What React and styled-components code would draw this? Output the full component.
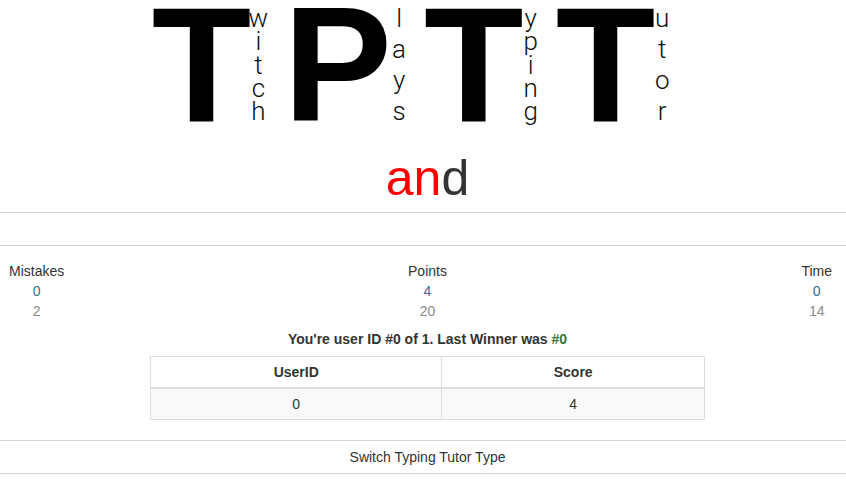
import styled, { createGlobalStyle } from "styled-components";

const GlobalStyle = createGlobalStyle`
  body {
    margin: 0;
    background: #fff;
    color: #333;
    font-family: "Liberation Sans", Arial, sans-serif;
    font-size: 14px;
    line-height: 20px;
  }
`;

const logo = [
  { big: "T", rest: "witch" },
  { big: "P", rest: "lays" },
  { big: "T", rest: "yping" },
  { big: "T", rest: "utor" },
];

const stats = [
  { label: "Mistakes", now: 0, best: 2, align: "start" },
  { label: "Points", now: 4, best: 20, align: "center" },
  { label: "Time", now: 0, best: 14, align: "end" },
];

const scores = [{ id: 0, score: 4 }];

const App = () => {
  return (
    <Page>
      <GlobalStyle />
      <Logo>
        {logo.map((g, i) => (
          <LogoGroup key={i}>
            <BigLetter>{g.big}</BigLetter>
            <SmallColumn>
              {g.rest.split("").map((c, j) => (
                <span key={j}>{c}</span>
              ))}
            </SmallColumn>
          </LogoGroup>
        ))}
      </Logo>

      <Word>
        <Typed>an</Typed>d
      </Word>

      <Rule $top={9} />
      <Rule $top={32} />

      <Stats>
        {stats.map((s) => (
          <StatCol key={s.label} $align={s.align}>
            <span>{s.label}</span>
            <StatValue $tone="info">{s.now}</StatValue>
            <StatValue $tone="muted">{s.best}</StatValue>
          </StatCol>
        ))}
      </Stats>

      <Content>
        <Notice>
          You're user ID #0 of 1. Last Winner was <Winner>#0</Winner>
        </Notice>
        <ScoreTable>
          <thead>
            <tr>
              <Th $w="52.6%">UserID</Th>
              <Th>Score</Th>
            </tr>
          </thead>
          <tbody>
            {scores.map((r, i) => (
              <tr key={r.id}>
                <Td $striped={i % 2 === 0}>{r.id}</Td>
                <Td $striped={i % 2 === 0}>{r.score}</Td>
              </tr>
            ))}
          </tbody>
        </ScoreTable>
      </Content>

      <SwitchBar>Switch Typing Tutor Type</SwitchBar>
    </Page>
  );
};

const Page = styled.div`
  width: 846px;
  min-height: 498px;
`;

const Logo = styled.div`
  display: flex;
  justify-content: center;
  gap: 18px;
  padding: 6px 25px 4px 0;
`;

const LogoGroup = styled.div`
  display: flex;
  align-items: flex-start;
`;

const BigLetter = styled.span`
  font-family: "Liberation Sans", Arial, sans-serif;
  font-weight: 700;
  font-size: 163px;
  line-height: 117px;
  height: 117px;
  color: #000;
`;

const SmallColumn = styled.div`
  display: flex;
  flex-direction: column;
  justify-content: space-between;
  align-items: center;
  width: 14px;
  height: 113px;
  margin-top: 2px;
  font-family: Roboto, "Liberation Sans", sans-serif;
  font-weight: 300;
  font-size: 26px;
  line-height: 20px;
  color: #111;
`;

const Word = styled.div`
  margin-top: 26px;
  padding-left: 9px;
  text-align: center;
  font-size: 50px;
  line-height: 50px;
  color: #333;
`;

const Typed = styled.span`
  color: #ff0000;
`;

const Rule = styled.div`
  margin-top: ${(p) => p.$top}px;
  border-top: 1px solid #d4d4d4;
`;

const Stats = styled.div`
  display: grid;
  grid-template-columns: 1fr auto 1fr;
  margin-top: 15px;
  padding-left: 9px;
`;

const StatCol = styled.div`
  display: flex;
  flex-direction: column;
  align-items: center;
  justify-self: ${(p) => p.$align};
  padding-right: ${(p) => (p.$align === "end" ? "14px" : "0")};
`;

const StatValue = styled.span`
  color: ${(p) => (p.$tone === "info" ? "#31708f" : "#8a8a8a")};
`;

const Content = styled.div`
  padding-left: 9px;
`;

const Notice = styled.div`
  margin-top: 8px;
  text-align: center;
  font-weight: 700;
  color: #333;
`;

const Winner = styled.span`
  color: #3c763d;
`;

const ScoreTable = styled.table`
  width: 555px;
  margin: 7px auto 0;
  border-collapse: collapse;
  border: 1px solid #ddd;
`;

const Th = styled.th`
  width: ${(p) => p.$w || "auto"};
  padding: 5px;
  border: 1px solid #ddd;
  border-bottom-width: 2px;
  font-weight: 700;
  text-align: center;
`;

const Td = styled.td`
  padding: 5px;
  border: 1px solid #ddd;
  text-align: center;
  background: ${(p) => (p.$striped ? "#f9f9f9" : "#fff")};
`;

const SwitchBar = styled.div`
  margin-top: 20px;
  padding: 6px 0 6px 9px;
  border-top: 1px solid #d4d4d4;
  border-bottom: 1px solid #d4d4d4;
  text-align: center;
  color: #333;
`;

export default App;
